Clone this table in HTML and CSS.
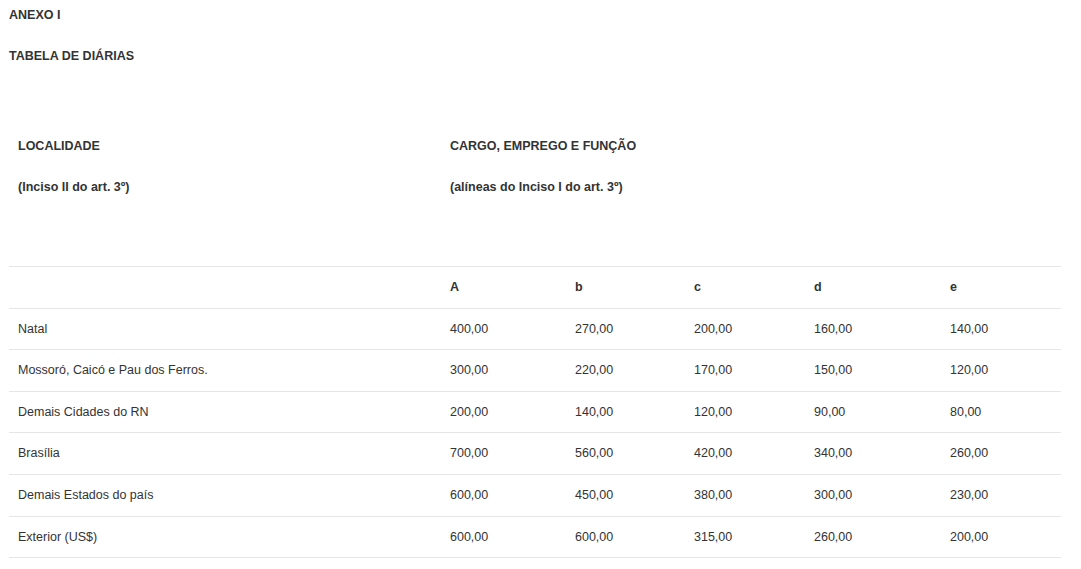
FILE: index.html
```html
<!DOCTYPE html>
<html lang="pt-BR">
<head>
<meta charset="utf-8">
<title>Anexo I - Tabela de Diárias</title>
<link rel="stylesheet" href="styles.css">
</head>
<body>
<div class="doc">
  <p class="title">ANEXO I</p>
  <p class="title">TABELA DE DIÁRIAS</p>
  <table class="diarias">
    <colgroup>
      <col class="c-loc">
      <col class="c-a">
      <col class="c-b">
      <col class="c-c">
      <col class="c-d">
      <col class="c-e">
    </colgroup>
    <tr class="head">
      <td>
        <p>LOCALIDADE</p>
        <p>(Inciso II do art. 3º)</p>
      </td>
      <td colspan="5">
        <p>CARGO, EMPREGO E FUNÇÃO</p>
        <p>(alíneas do Inciso I do art. 3º)</p>
      </td>
    </tr>
    <tr class="letters">
      <td></td>
      <td>A</td>
      <td>b</td>
      <td>c</td>
      <td>d</td>
      <td>e</td>
    </tr>
    <tr><td>Natal</td><td>400,00</td><td>270,00</td><td>200,00</td><td>160,00</td><td>140,00</td></tr>
    <tr><td>Mossoró, Caicó e Pau dos Ferros.</td><td>300,00</td><td>220,00</td><td>170,00</td><td>150,00</td><td>120,00</td></tr>
    <tr><td>Demais Cidades do RN</td><td>200,00</td><td>140,00</td><td>120,00</td><td>90,00</td><td>80,00</td></tr>
    <tr><td>Brasília</td><td>700,00</td><td>560,00</td><td>420,00</td><td>340,00</td><td>260,00</td></tr>
    <tr><td>Demais Estados do país</td><td>600,00</td><td>450,00</td><td>380,00</td><td>300,00</td><td>230,00</td></tr>
    <tr><td>Exterior (US$)</td><td>600,00</td><td>600,00</td><td>315,00</td><td>260,00</td><td>200,00</td></tr>
  </table>
</div>
</body>
</html>
```
FILE: styles.css
```css
html, body {
  margin: 0;
  padding: 0;
  background: #fff;
}
body {
  font-family: "Liberation Sans", Arial, sans-serif;
  font-size: 12.5px;
  line-height: 18px;
  color: #333;
}
.doc {
  padding: 6px 20px 0 9px;
}
.title {
  margin: 0 0 23px;
  font-weight: bold;
}
.diarias {
  width: 1052px;
  border-collapse: collapse;
  table-layout: fixed;
  margin-top: 72px;
}
.c-loc { width: 432px; }
.c-a { width: 125px; }
.c-b { width: 119px; }
.c-c { width: 120px; }
.c-d { width: 136px; }
.c-e { width: 120px; }
.diarias td {
  padding: 12px 9px;
  vertical-align: top;
  border-top: 1px solid #e6e6e6;
  line-height: 16.6px;
}
.diarias tr:last-child td {
  border-bottom: 1px solid #e6e6e6;
}
.diarias .head td {
  border-top: none;
  font-weight: bold;
  padding: 0 9px 47px;
  line-height: 18px;
}
.diarias .head p {
  margin: 0 0 23px;
}
.diarias .letters td {
  font-weight: bold;
}
```
